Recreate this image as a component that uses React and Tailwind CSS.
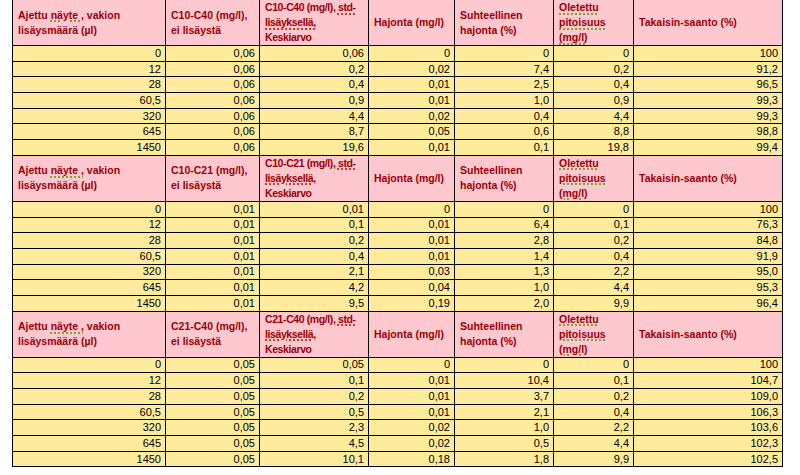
import React from 'react';

const sections = [
  {
    range: 'C10-C40',
    rows: [
      ['0', '0,06', '0,06', '0', '0', '0', '100'],
      ['12', '0,06', '0,2', '0,02', '7,4', '0,2', '91,2'],
      ['28', '0,06', '0,4', '0,01', '2,5', '0,4', '96,5'],
      ['60,5', '0,06', '0,9', '0,01', '1,0', '0,9', '99,3'],
      ['320', '0,06', '4,4', '0,02', '0,4', '4,4', '99,3'],
      ['645', '0,06', '8,7', '0,05', '0,6', '8,8', '98,8'],
      ['1450', '0,06', '19,6', '0,01', '0,1', '19,8', '99,4'],
    ],
  },
  {
    range: 'C10-C21',
    rows: [
      ['0', '0,01', '0,01', '0', '0', '0', '100'],
      ['12', '0,01', '0,1', '0,01', '6,4', '0,1', '76,3'],
      ['28', '0,01', '0,2', '0,01', '2,8', '0,2', '84,8'],
      ['60,5', '0,01', '0,4', '0,01', '1,4', '0,4', '91,9'],
      ['320', '0,01', '2,1', '0,03', '1,3', '2,2', '95,0'],
      ['645', '0,01', '4,2', '0,04', '1,0', '4,4', '95,3'],
      ['1450', '0,01', '9,5', '0,19', '2,0', '9,9', '96,4'],
    ],
  },
  {
    range: 'C21-C40',
    rows: [
      ['0', '0,05', '0,05', '0', '0', '0', '100'],
      ['12', '0,05', '0,1', '0,01', '10,4', '0,1', '104,7'],
      ['28', '0,05', '0,2', '0,01', '3,7', '0,2', '109,0'],
      ['60,5', '0,05', '0,5', '0,01', '2,1', '0,4', '106,3'],
      ['320', '0,05', '2,3', '0,02', '1,0', '2,2', '103,6'],
      ['645', '0,05', '4,5', '0,02', '0,5', '4,4', '102,3'],
      ['1450', '0,05', '10,1', '0,18', '1,8', '9,9', '102,5'],
    ],
  },
];

const widths = ['w-[153px]', 'w-[94px]', 'w-[109px]', 'w-[86px]', 'w-[99px]', 'w-[80px]', 'w-[149px]'];

const green = 'underline decoration-dotted decoration-[#7aa33c] decoration-2 underline-offset-2';
const red = 'underline decoration-dotted decoration-[#d23a2a] decoration-2 underline-offset-2';

function HeaderRow({ range }) {
  const th =
    'border border-black bg-[#ffc7ce] text-[#9c0006] font-bold text-left align-middle px-[5px] py-0 leading-[15px] whitespace-nowrap overflow-hidden';
  return (
    <tr className="h-[45px]">
      <th className={th}>
        Ajettu <span className={green}>näyte ,</span> vakion<br />lisäysmäärä (µl)
      </th>
      <th className={th}>
        {range} (mg/l),<br />ei lisäystä
      </th>
      <th className={th + ' tracking-[-0.4px]'}>
        {range} (mg/l), <span className={red}>std-</span>
        <br />
        <span className={red}>lisäyksellä,</span>
        <br />
        Keskiarvo
      </th>
      <th className={th}>Hajonta (mg/l)</th>
      <th className={th}>
        Suhteellinen<br />hajonta (%)
      </th>
      <th className={th}>
        <span className={green}>Oletettu </span>
        <br />
        <span className={green}>pitoisuus </span>
        <br />
        <span className={green}>(mg/l)</span>
      </th>
      <th className={th}>Takaisin-saanto (%)</th>
    </tr>
  );
}

export default function App() {
  return (
    <div className="w-[800px] h-[475px] bg-white pl-[12px] overflow-hidden font-['Liberation_Sans',Arial,sans-serif] text-[10.5px]">
      <table className="-mt-px border-collapse table-fixed w-[771px]">
        <colgroup>
          {widths.map((w, i) => (
            <col key={i} className={w} />
          ))}
        </colgroup>
        <tbody>
          {sections.map((s) => (
            <React.Fragment key={s.range}>
              <HeaderRow range={s.range} />
              {s.rows.map((r, i) => (
                <tr key={i} className="h-[15.7px]">
                  {r.map((v, j) => (
                    <td
                      key={j}
                      className="border border-black bg-[#ffeb9c] text-black text-right text-[11px] leading-[13px] px-[4px] py-0"
                    >
                      {v}
                    </td>
                  ))}
                </tr>
              ))}
            </React.Fragment>
          ))}
        </tbody>
      </table>
    </div>
  );
}
